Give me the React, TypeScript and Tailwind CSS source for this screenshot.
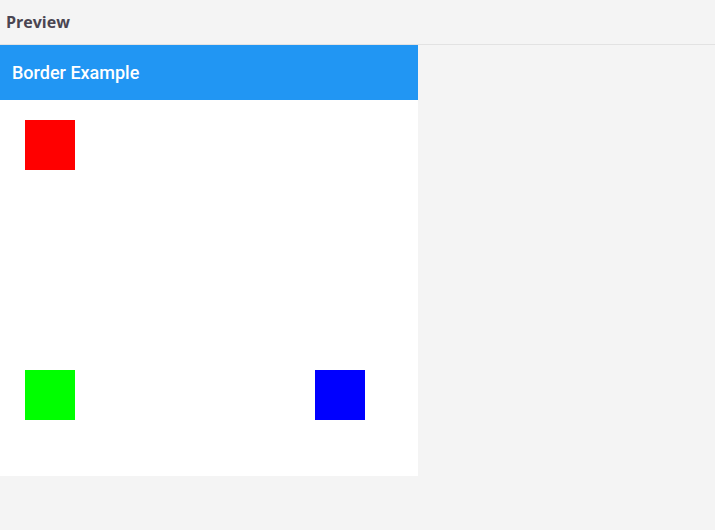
export default function App() {
  return (
    <div className="w-[715px] h-[530px] bg-[#f4f4f4] flex flex-col">
      {/* Top bar */}
      <div className="h-[45px] border-b border-[#e2e2e2] flex items-center px-[6px]">
        <span className="text-[16px] font-bold text-[#4a4551] font-['Open_Sans',sans-serif]">Preview</span>
      </div>

      {/* Preview panel */}
      <div className="w-[418px] bg-white flex flex-col">
        <div className="h-[55px] bg-[#2196f3] flex items-center px-3">
          <span className="text-[18px] font-medium text-white font-['Roboto',sans-serif]">Border Example</span>
        </div>
        <div className="h-[376px] pt-5 pl-[25px] pr-[53px] flex flex-col">
          <div className="w-[50px] h-[50px] bg-[#ff0000]" />
          <div className="mt-[200px] flex justify-between">
            <div className="w-[50px] h-[50px] bg-[#00ff00]" />
            <div className="w-[50px] h-[50px] bg-[#0000ff]" />
          </div>
        </div>
      </div>
    </div>
  );
}
